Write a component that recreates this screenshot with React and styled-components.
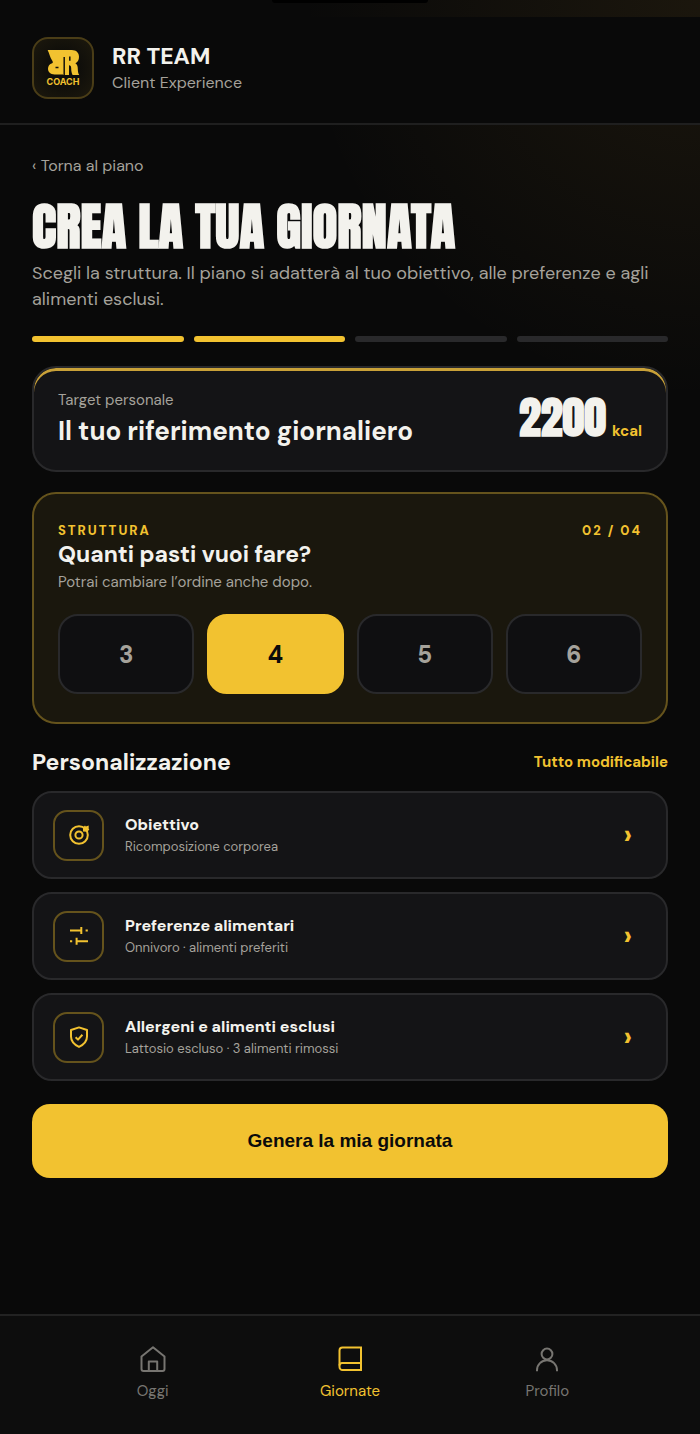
import React, { useState } from 'react';
import styled, { createGlobalStyle, css } from 'styled-components';

const gold = '#f2c230';
const cream = '#f3f2ed';
const muted = '#a5a29b';
const display = `Anton, 'Liberation Sans Narrow', 'Liberation Sans', sans-serif`;

const GlobalStyle = createGlobalStyle`
  * {
    box-sizing: border-box;
  }
  body {
    margin: 0;
    background: #090909;
    color: ${cream};
    font-family: 'DM Sans', Inter, sans-serif;
  }
  h1, h2, p {
    margin: 0;
  }
  button {
    font-family: inherit;
    cursor: pointer;
  }
`;

const Page = styled.div`
  display: flex;
  flex-direction: column;
  min-height: 100vh;
  position: relative;
  padding-top: 17px;
  background: radial-gradient(circle at 100% 0, rgba(242, 180, 60, 0.08), transparent 400px);
`;

const Notch = styled.div`
  position: absolute;
  top: 0;
  left: 50%;
  width: 156px;
  height: 3px;
  margin-left: -78px;
  background: #000;
  border-radius: 0 0 12px 12px;
`;

const Header = styled.header`
  display: flex;
  align-items: center;
  gap: 18px;
  padding: 20px 32px 24px;
  background: #090909;
  border-bottom: 2px solid #1f1f1f;
`;

const LogoBox = styled.div`
  width: 62px;
  height: 62px;
  border: 2px solid #4a3d17;
  border-radius: 16px;
  background: radial-gradient(circle, #0f0e0a 40%, #1d190d);
  svg {
    display: block;
  }
`;

const Brand = styled.div`
  font-size: 23px;
  line-height: 30px;
  font-weight: 700;
`;

const BrandSub = styled.div`
  font-size: 16px;
  line-height: 24px;
  color: ${muted};
`;

const Main = styled.main`
  flex: 1;
  display: flex;
  flex-direction: column;
  padding: 29px 32px 40px;
`;

const BackLink = styled.a`
  align-self: flex-start;
  font-size: 16px;
  line-height: 24px;
  color: ${muted};
  text-decoration: none;
`;

const Title = styled.h1`
  margin-top: 16px;
  font-family: ${display};
  font-size: 51px;
  line-height: 66px;
  font-weight: 700;
  text-transform: uppercase;
`;

const Lead = styled.p`
  font-size: 18px;
  line-height: 26px;
  color: ${muted};
`;

const Progress = styled.div`
  display: grid;
  grid-template-columns: repeat(4, 1fr);
  gap: 10px;
  margin: 24px 0;
`;

const Step = styled.span`
  height: 6px;
  border-radius: 3px;
  background: ${(props) => (props.$done ? gold : '#29292b')};
`;

const Card = styled.section`
  padding: 28px 24px;
  border: 2px solid #29292b;
  border-radius: 24px;
  background: #141416;
`;

const TargetCard = styled(Card)`
  display: flex;
  justify-content: space-between;
  align-items: center;
  padding: 18px 24px 22px;
  box-shadow: inset 0 3px 0 #c9a138;
`;

const Small = styled.p`
  font-size: 15px;
  line-height: 28px;
  color: ${muted};
`;

const TargetTitle = styled.h2`
  font-size: 26px;
  line-height: 34px;
  font-weight: 700;
`;

const Amount = styled.div`
  display: flex;
  align-items: baseline;
  gap: 6px;
  font-family: ${display};
  font-size: 44px;
  line-height: 62px;
  font-weight: 700;
`;

const Unit = styled.span`
  font-family: 'DM Sans', Inter, sans-serif;
  font-size: 15px;
  line-height: 20px;
  color: ${gold};
`;

const MealsCard = styled(Card)`
  margin-top: 20px;
  border-color: #65531c;
  background: #1a170d;
`;

const Eyebrow = styled.div`
  display: flex;
  justify-content: space-between;
  font-size: 13px;
  line-height: 18px;
  font-weight: 800;
  letter-spacing: 2px;
  color: ${gold};
`;

const Heading = styled.h2`
  font-size: 23px;
  line-height: 28px;
  font-weight: 700;
`;

const Options = styled.div`
  display: grid;
  grid-template-columns: repeat(4, 1fr);
  gap: 13px;
  margin-top: 18px;
`;

const Option = styled.button`
  height: 80px;
  border: 2px solid #29292b;
  border-radius: 20px;
  background: #0f0f11;
  color: ${muted};
  font-size: 24px;
  font-weight: 800;
  ${(props) =>
    props.$active &&
    css`
      border-color: ${gold};
      background: ${gold};
      color: #0b0b0b;
    `}
`;

const SectionHead = styled.div`
  display: flex;
  justify-content: space-between;
  align-items: center;
  margin: 24px 0 15px;
`;

const Note = styled.span`
  font-size: 15px;
  line-height: 20px;
  font-weight: 700;
  color: ${gold};
`;

const Rows = styled.div`
  display: flex;
  flex-direction: column;
  gap: 13px;
`;

const Row = styled.button`
  display: flex;
  align-items: center;
  gap: 21px;
  height: 88px;
  padding: 0 34px 0 19px;
  border: 2px solid #29292b;
  border-radius: 20px;
  background: #141416;
  color: ${cream};
  text-align: left;
`;

const IconBox = styled.span`
  display: grid;
  place-items: center;
  width: 51px;
  height: 51px;
  border: 2px solid #65531c;
  border-radius: 14px;
  color: ${gold};
`;

const RowText = styled.span`
  flex: 1;
  display: flex;
  flex-direction: column;
`;

const RowTitle = styled.span`
  font-size: 16px;
  line-height: 24px;
  font-weight: 800;
`;

const RowSub = styled.span`
  font-size: 13px;
  line-height: 20px;
  color: ${muted};
`;

const Chevron = styled.span`
  font-size: 28px;
  line-height: 32px;
  font-weight: 800;
  color: ${gold};
`;

const Cta = styled.button`
  margin-top: 23px;
  height: 74px;
  border: none;
  border-radius: 18px;
  background: ${gold};
  color: #0b0b0b;
  && {
    font-family: 'Liberation Sans', Arial, sans-serif;
  }
  font-size: 19px;
  font-weight: 700;
`;

const Nav = styled.nav`
  position: sticky;
  bottom: 0;
  display: grid;
  grid-template-columns: repeat(3, 1fr);
  padding: 29px 54px 32px;
  border-top: 2px solid #222;
  background: #0d0d0d;
`;

const NavLink = styled.a`
  display: flex;
  flex-direction: column;
  align-items: center;
  gap: 7px;
  font-size: 15px;
  line-height: 22px;
  text-decoration: none;
  color: ${(props) => (props.$active ? gold : '#777571')};
`;

const Icon = ({ size, children }) => (
  <svg
    width={size}
    height={size}
    viewBox={`0 0 ${size} ${size}`}
    fill="none"
    stroke="currentColor"
    strokeWidth="2"
    strokeLinejoin="round"
    aria-hidden="true"
  >
    {children}
  </svg>
);

const Logo = () => (
  <LogoBox>
    <svg width="58" height="58" viewBox="0 0 58 58" fill={gold}>
      <path d="M13.600 11H30V35.500H20.500C16.500 35.500 14 33 14 29.800c0-2.600 1.400-4.600 4.200-5.500 1-.4.8-1.600-.2-3C16 18.500 15.500 14.500 13.600 11z" />
      <path d="M29.200 11h8.600c4.600 0 7.200 2.800 7.200 6.800 0 3.200-1.200 5.400-3.600 6.400 1.800 1.200 2.400 3 2.400 5.600 0 2.400.4 4.600 1.400 6.200h-6.600c-1-2-1.400-4.200-1.400-6.800 0-2-.7-3-2.200-3V36h-5.800z" />
      <path d="M21.500 28.600h3M30.200 18v18M35.800 17.500v4.200" fill="none" stroke="#14120b" strokeWidth="1.500" />
      <text x="29" y="46" fontSize="9" fontWeight="700" fontFamily="Inter, sans-serif" textAnchor="middle">
        COACH
      </text>
    </svg>
  </LogoBox>
);

const rows = [
  {
    title: 'Obiettivo',
    sub: 'Ricomposizione corporea',
    icon: (
      <>
        <circle cx="12" cy="12" r="8.8" />
        <circle cx="12" cy="12" r="3.6" />
        <path d="M16 8.500V4.400l2-1.800.8 1 2.900-1v3.200l.6.800-2 2.200z" fill="currentColor" stroke="none" />
      </>
    ),
  },
  {
    title: 'Preferenze alimentari',
    sub: 'Onnivoro · alimenti preferiti',
    icon: <path d="M3 6.500h11M14.300 3v7M18.600 6.500h2.200M3 17.300h2.200M9.600 13.800v7M9.600 17.300H21" />,
  },
  {
    title: 'Allergeni e alimenti esclusi',
    sub: 'Lattosio escluso · 3 alimenti rimossi',
    icon: (
      <>
        <path d="M12 2.400 20 5v6.500c0 4.600-3 8-8 10.400-5-2.400-8-5.800-8-10.400V5z" />
        <path d="m8.600 12.300 2.400 2.300 4.400-4.800" />
      </>
    ),
  },
];

const tabs = [
  {
    label: 'Oggi',
    icon: (
      <>
        <path d="M2.500 11.500 14 2.300l11.500 9.200V24a2 2 0 0 1-2 2h-19a2 2 0 0 1-2-2z" />
        <path d="M9.800 26v-9.500h8.400V26" />
      </>
    ),
  },
  {
    label: 'Giornate',
    active: true,
    icon: (
      <>
        <path d="M25 2.500H6.500a3 3 0 0 0-3 3V22a3 3 0 0 0 3 3H25z" strokeLinejoin="miter" />
        <path d="M3.500 20.500a2.500 2.500 0 0 1 2.500-2.500h19" />
      </>
    ),
  },
  {
    label: 'Profilo',
    icon: (
      <>
        <circle cx="14" cy="9" r="5.400" />
        <path d="M4 26.200v-1a10 10 0 0 1 20 0v1" />
      </>
    ),
  },
];

const App = () => {
  const [meals, setMeals] = useState(4);

  return (
    <>
      <GlobalStyle />
      <Page>
        <Notch />
        <Header>
          <Logo />
          <div>
            <Brand>RR TEAM</Brand>
            <BrandSub>Client Experience</BrandSub>
          </div>
        </Header>
        <Main>
          <BackLink href="#piano">‹ Torna al piano</BackLink>
          <Title>Crea la tua giornata</Title>
          <Lead>
            Scegli la struttura. Il piano si adatterà al tuo obiettivo, alle preferenze e agli alimenti esclusi.
          </Lead>
          <Progress>
            {[1, 2, 3, 4].map((n) => (
              <Step key={n} $done={n <= 2} />
            ))}
          </Progress>
          <TargetCard>
            <div>
              <Small>Target personale</Small>
              <TargetTitle>Il tuo riferimento giornaliero</TargetTitle>
            </div>
            <Amount>
              2200 <Unit>kcal</Unit>
            </Amount>
          </TargetCard>
          <MealsCard>
            <Eyebrow>
              <span>STRUTTURA</span>
              <span>02 / 04</span>
            </Eyebrow>
            <Heading>Quanti pasti vuoi fare?</Heading>
            <Small>Potrai cambiare l’ordine anche dopo.</Small>
            <Options>
              {[3, 4, 5, 6].map((n) => (
                <Option key={n} $active={n === meals} aria-pressed={n === meals} onClick={() => setMeals(n)}>
                  {n}
                </Option>
              ))}
            </Options>
          </MealsCard>
          <SectionHead>
            <Heading>Personalizzazione</Heading>
            <Note>Tutto modificabile</Note>
          </SectionHead>
          <Rows>
            {rows.map((row) => (
              <Row key={row.title}>
                <IconBox>
                  <Icon size={24}>{row.icon}</Icon>
                </IconBox>
                <RowText>
                  <RowTitle>{row.title}</RowTitle>
                  <RowSub>{row.sub}</RowSub>
                </RowText>
                <Chevron>›</Chevron>
              </Row>
            ))}
          </Rows>
          <Cta>Genera la mia giornata</Cta>
        </Main>
        <Nav>
          {tabs.map((tab) => (
            <NavLink key={tab.label} href={`#${tab.label.toLowerCase()}`} $active={tab.active}>
              <Icon size={28}>{tab.icon}</Icon>
              {tab.label}
            </NavLink>
          ))}
        </Nav>
      </Page>
    </>
  );
};

export default App;
